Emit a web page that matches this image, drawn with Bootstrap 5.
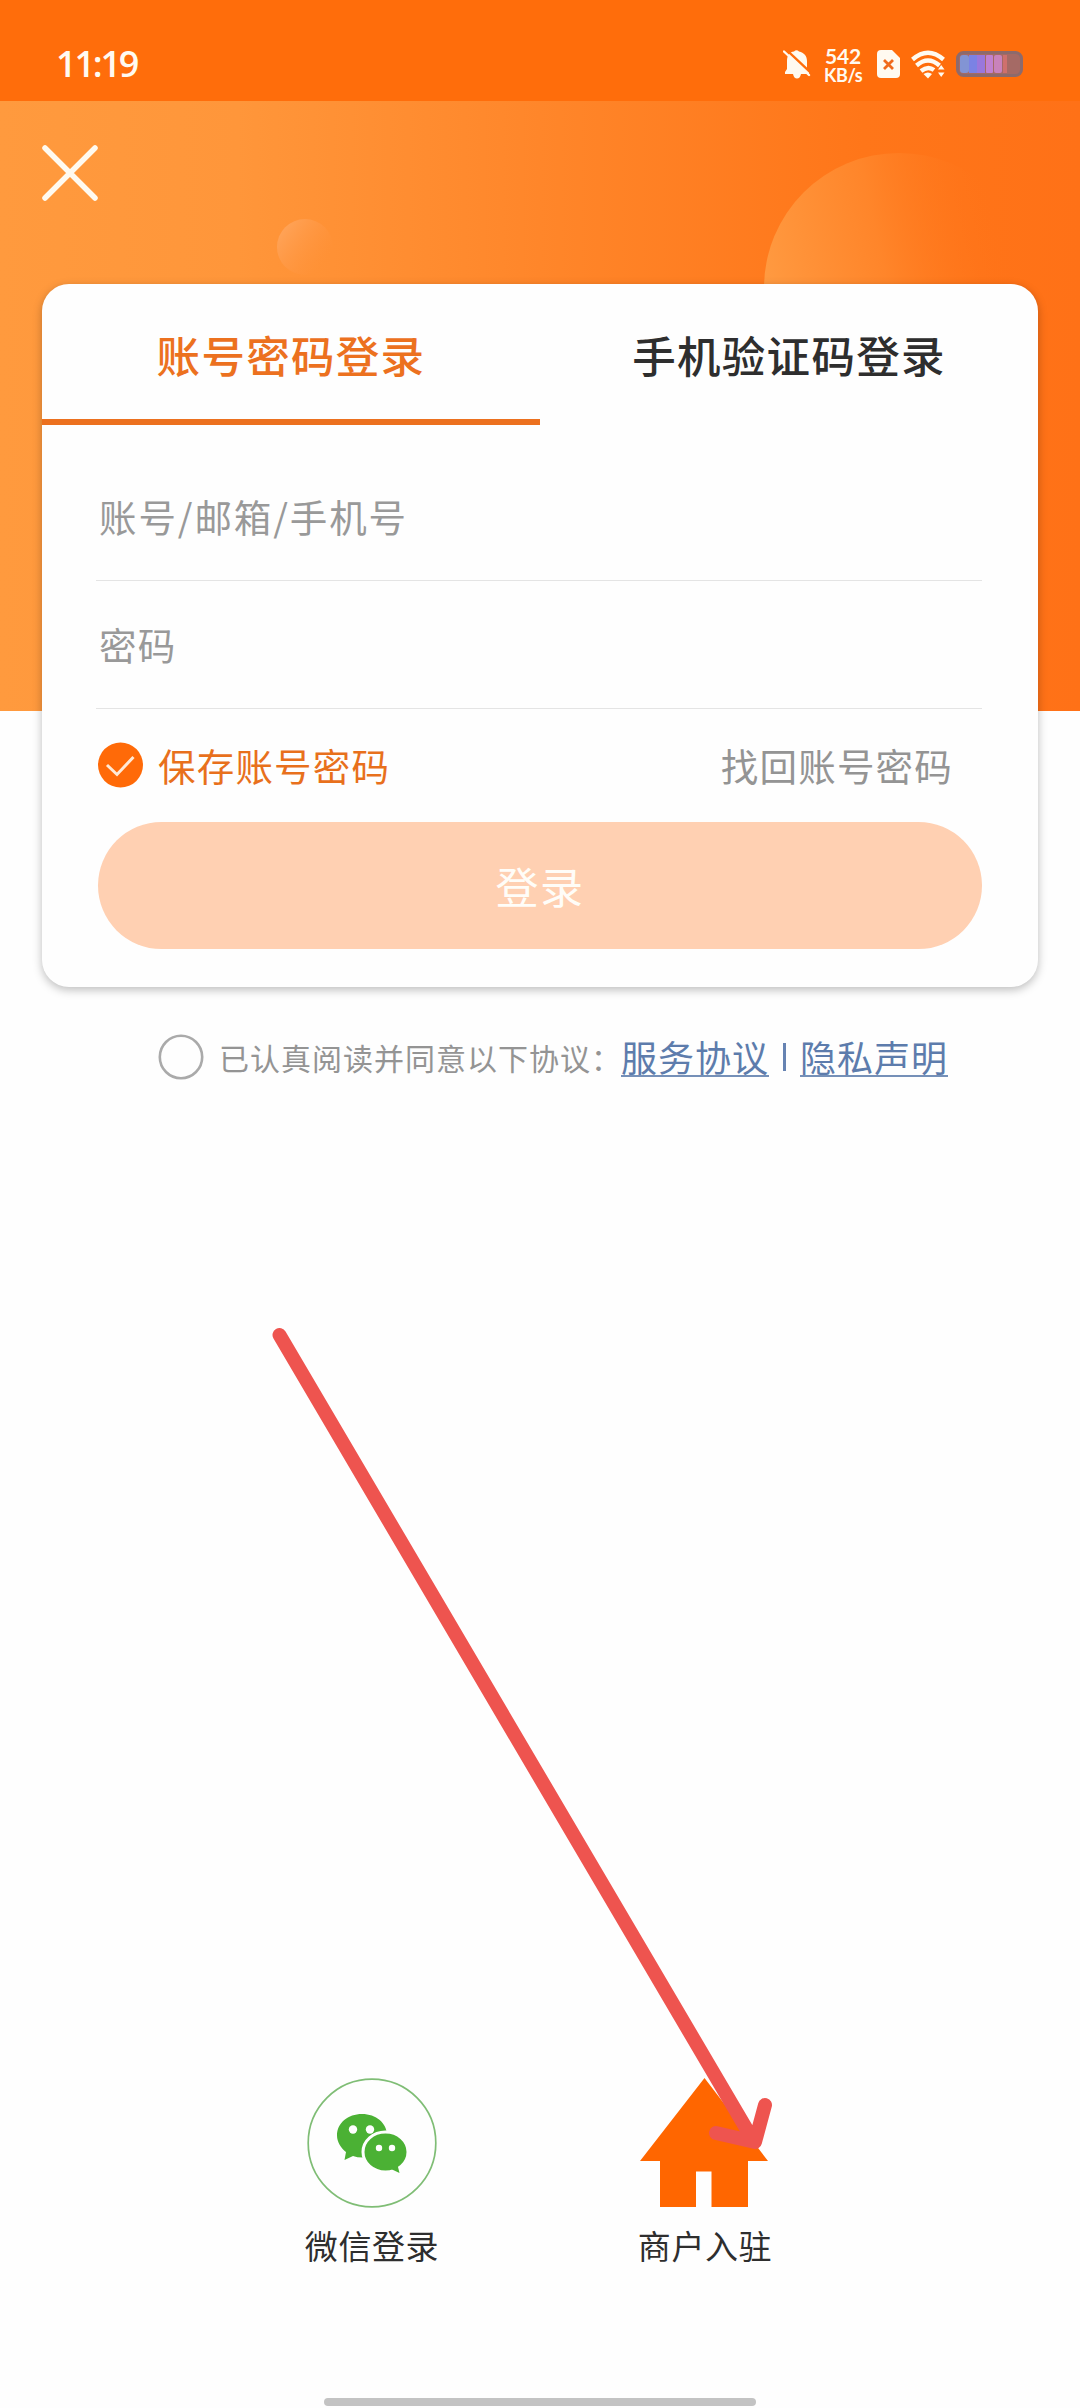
<!DOCTYPE html>
<html lang="zh-CN">
<head>
<meta charset="utf-8">
<meta name="viewport" content="width=device-width, initial-scale=1">
<title>账号密码登录</title>
<link href="https://cdn.jsdelivr.net/npm/bootstrap@5.3.0/dist/css/bootstrap.min.css" rel="stylesheet">
<style>
body{font-family:"Noto Sans","Noto Sans CJK SC",sans-serif;background:#fefefe;color:#2e2e2e;line-height:1}
.cjk{font-family:"Noto Sans CJK SC",sans-serif}
.screen{width:1080px;height:2408px}
.statusbar{height:101px;background:#ff6d0b;color:#fffaf0;padding:20px 57px 0 56px}
.status-line{height:88px}
.clock{font-family:"Open Sans","Noto Sans",sans-serif;font-size:36px;font-weight:600;letter-spacing:-2.2px}
.speed{font-family:Lato,sans-serif;font-weight:700;width:38px}
.speed-num{font-size:21px;line-height:21px;letter-spacing:-.2px}
.speed-unit{font-size:18px;line-height:18px;letter-spacing:-.4px}
.hero{height:610px;margin-bottom:-427px;background:linear-gradient(90deg,#ff9a3e 0,#ff963a 22%,#ff862a 50%,#ff7619 80%,#ff7117 100%)}
.close-btn{padding:44px 0 0 42px}
.login-card{margin:0 42px;width:996px;height:703px;border:0;border-radius:27px;box-shadow:0 3px 10px rgba(0,0,0,.26);background:#fefefe}
.tabs-row .nav-link{height:141px;padding:0 0 43px;color:#2e2e2e;border-radius:0;font-size:43.5px;letter-spacing:1.3px;font-weight:500;border-bottom:6px solid transparent}
.tabs-row .nav-link.active{color:#ec711f;background:none;border-color:#ec711f}
.field-row{border-bottom:1px solid #e4e4e4;margin:0 56px 0 54px}
.field-row .form-control{border:0;background:none;padding:0 0 5px 3px;height:100%;font-size:37.5px;letter-spacing:1.2px;line-height:1.4;border-radius:0}
.field-row .form-control::placeholder{color:#999;opacity:1}
.field-row .account-input{letter-spacing:1.9px}
.field-a{height:156px;padding-top:30px}
.field-b{height:128px;padding-top:2px}
.opts{height:113px;padding:0 85px 2px 56px;font-size:37.5px;letter-spacing:1.2px}
.opts .saved{color:#e8701c;gap:14px}
.opts .find{color:#949494;text-decoration:none}
.btn-login{width:884px;height:127px;border-radius:64px;margin-left:56px;border:0;font-size:43px;letter-spacing:1.5px;padding:0 0 1px}
.btn-login:disabled{background:#ffd0b2;color:#fffdf8;opacity:1}
.agree{height:46px;margin-top:47px;padding-left:158px;font-size:30px;letter-spacing:1px;color:#949494;white-space:nowrap}
.agree-text{width:402px}
.agree a{color:#5d7cac;font-size:36px;letter-spacing:1px;text-decoration:none;border-bottom:2px solid #7590b8;line-height:38px;height:40px;display:block}
.agree-sep{width:3px;height:28px;background:#6683b2;margin:0 14px 0 14px}
.others{padding-left:304px;margin-bottom:136px;gap:197px;font-size:33px;letter-spacing:.6px;font-weight:400}
.others a{width:136px;color:#2e2e2e;text-decoration:none;gap:21px;white-space:nowrap}
.homebar{width:432px;height:8px;border-radius:4px;background:#c3c3c3;margin:0 auto 2px}
.pointer{left:0;top:0;pointer-events:none}
</style>
</head>
<body>
<div class="screen d-flex flex-column position-relative overflow-hidden">
  <header class="statusbar d-flex justify-content-between flex-shrink-0">
    <div class="clock status-line d-flex align-items-center">11:19</div>
    <div class="status-line d-flex align-items-center">
      <svg width="28" height="30" viewBox="0 0 28 30" style="margin-right:13px"><path d="M2 25V23L4 20V12C4 6 7 3 11 2.500Q13.500 0 16 2.500C21 3.500 24 7 24 12V20L26 23V25H18Q17 29.500 14 29.500T10 25Z" fill="#fffaf0"/><path d="M2.500 0L28 24" stroke="#ff6d0b" stroke-width="2.400"/><path d="M1 2.500L26 26" stroke="#fffaf0" stroke-width="2.400" stroke-linecap="round"/></svg>
      <div class="speed text-center" style="margin-right:15px"><div class="speed-num">542</div><div class="speed-unit">KB/s</div></div>
      <svg width="24" height="28" viewBox="0 0 24 28" style="margin-right:10px"><path d="M4 0H15L23 8V24Q23 28 19 28H4Q0 28 0 24V4Q0 0 4 0Z" fill="#fffaf0"/><path d="M7 10L16 19M16 10L7 19" stroke="#f06a1c" stroke-width="2.800"/></svg>
      <svg width="34" height="29" viewBox="0 0 34 29" style="margin-right:11px"><g fill="none" stroke="#fffaf0" stroke-width="4.400"><path d="M1.500 9.500Q17-4 32.500 9.500"/><path d="M5.500 15.500Q17 5.500 28.500 15.500"/><path d="M10 21Q17 15.500 23 20"/></g><path d="M12.500 24Q17 21 21 24L17 28.500Z" fill="#fffaf0"/><path d="M27 19.500L30.200 15L33.500 19.500ZM27 22.500H33.500L30.200 27Z" fill="#fffaf0"/></svg>
      <svg width="67" height="26" viewBox="0 0 67 26"><rect x="1.500" y="1.500" width="64" height="23" rx="6" fill="#a56a65" stroke="#8d6a6c" stroke-width="3"/><rect x="4" y="4" width="9" height="18" rx="3" fill="#8294d4"/><rect x="13" y="4" width="8" height="18" fill="#7b82e4"/><rect x="21" y="4" width="8" height="18" fill="#9a77dc"/><rect x="30" y="4" width="7" height="18" rx="1" fill="#c181d0"/><rect x="38" y="4" width="8" height="18" rx="2" fill="#c982bb"/><rect x="47" y="4" width="4" height="18" fill="#cf706c"/></svg>
    </div>
  </header>

  <section class="hero position-relative flex-shrink-0">
    <svg class="position-absolute top-0 start-0" width="1080" height="183" viewBox="0 101 1080 183">
      <defs>
        <linearGradient id="orbLarge" x1="0" y1=".55" x2=".9" y2=".35"><stop offset="0" stop-color="#ff9b42"/><stop offset=".5" stop-color="#ff882d" stop-opacity=".85"/><stop offset="1" stop-color="#ff7318" stop-opacity="0"/></linearGradient>
        <linearGradient id="orbSmall" x1=".1" y1=".2" x2=".85" y2=".75"><stop offset="0" stop-color="#ffa45a" stop-opacity=".9"/><stop offset="1" stop-color="#ff9440" stop-opacity="0"/></linearGradient>
      </defs>
      <circle cx="899" cy="288" r="135" fill="url(#orbLarge)"/>
      <circle cx="305" cy="247" r="28" fill="url(#orbSmall)"/>
    </svg>
    <div class="close-btn position-relative"><svg class="d-block" width="56" height="56" viewBox="0 0 56 56"><path d="M3 3L53 53M53 3L3 53" stroke="#fffaf0" stroke-width="5.500" stroke-linecap="round"/></svg></div>
  </section>

  <main class="card login-card cjk flex-shrink-0">
    <nav class="nav nav-justified tabs-row">
      <a class="nav-link active d-flex align-items-end justify-content-center w-50" href="#">账号密码登录</a>
      <a class="nav-link d-flex align-items-end justify-content-center w-50" href="#">手机验证码登录</a>
    </nav>
    <div class="field-row field-a"><input class="form-control account-input cjk shadow-none" placeholder="账号/邮箱/手机号"></div>
    <div class="field-row field-b"><input class="form-control cjk shadow-none" type="password" placeholder="密码"></div>
    <div class="opts d-flex align-items-center justify-content-between">
      <div class="saved d-flex align-items-center">
        <svg width="46" height="46" viewBox="0 0 46 46"><circle cx="22.500" cy="23" r="22.500" fill="#ff6a08"/><path d="M9 23L19 32.500L35.500 15" fill="none" stroke="#ffe9d6" stroke-width="3"/></svg>
        <span>保存账号密码</span>
      </div>
      <a class="find" href="#">找回账号密码</a>
    </div>
    <button class="btn btn-login cjk" disabled>登录</button>
  </main>

  <div class="agree cjk d-flex align-items-center flex-shrink-0">
    <svg width="46" height="46" viewBox="0 0 46 46" style="margin-right:15px"><circle cx="23" cy="23" r="21.200" fill="none" stroke="#aaa" stroke-width="2.600"/></svg>
    <span class="agree-text">已认真阅读并同意以下协议：</span>
    <a href="#">服务协议</a><span class="agree-sep"></span><a href="#">隐私声明</a>
  </div>

  <div class="others cjk d-flex mt-auto">
    <a class="d-flex flex-column align-items-center" href="#">
      <svg width="130" height="130" viewBox="0 0 130 130"><circle cx="65" cy="65" r="63.800" fill="#fefefe" stroke="#7fbd75" stroke-width="1.700"/>
        <path d="M55 36C41 36 30 45 30 57.500C30 64 34 70 39 74L37.500 82L46 78Q50 79.500 56 79.500C69 79 80 69 80 57.500C80 45 69 36 55 36Z" fill="#4bb134"/>
        <ellipse cx="78.500" cy="74" rx="22.500" ry="20" fill="#4bb134" stroke="#fefefe" stroke-width="3"/><path d="M84 91L92.500 95L90 85Z" fill="#4bb134"/>
        <g fill="#fefefe"><circle cx="46" cy="51.500" r="4.200"/><circle cx="63" cy="51.500" r="4.200"/><circle cx="72" cy="70" r="3.200"/><circle cx="85" cy="70" r="3.200"/></g></svg>
      <span>微信登录</span>
    </a>
    <a class="d-flex flex-column align-items-center" href="#">
      <svg width="130" height="130" viewBox="0 0 130 130"><path d="M64.500 0L128 83H108V129H71.500V93.500H56V129H20V83H0Z" fill="#ff6600"/></svg>
      <span>商户入驻</span>
    </a>
  </div>
  <div class="homebar flex-shrink-0"></div>

  <svg class="pointer position-absolute" width="1080" height="2408" viewBox="0 0 1080 2408"><path d="M279.500 1335L753 2140M716 2133L755 2142L765 2105" fill="none" stroke="#ee544f" stroke-width="14" stroke-linecap="round" stroke-linejoin="round"/></svg>
</div>
<script src="https://cdn.jsdelivr.net/npm/bootstrap@5.3.0/dist/js/bootstrap.bundle.min.js"></script>
</body>
</html>
